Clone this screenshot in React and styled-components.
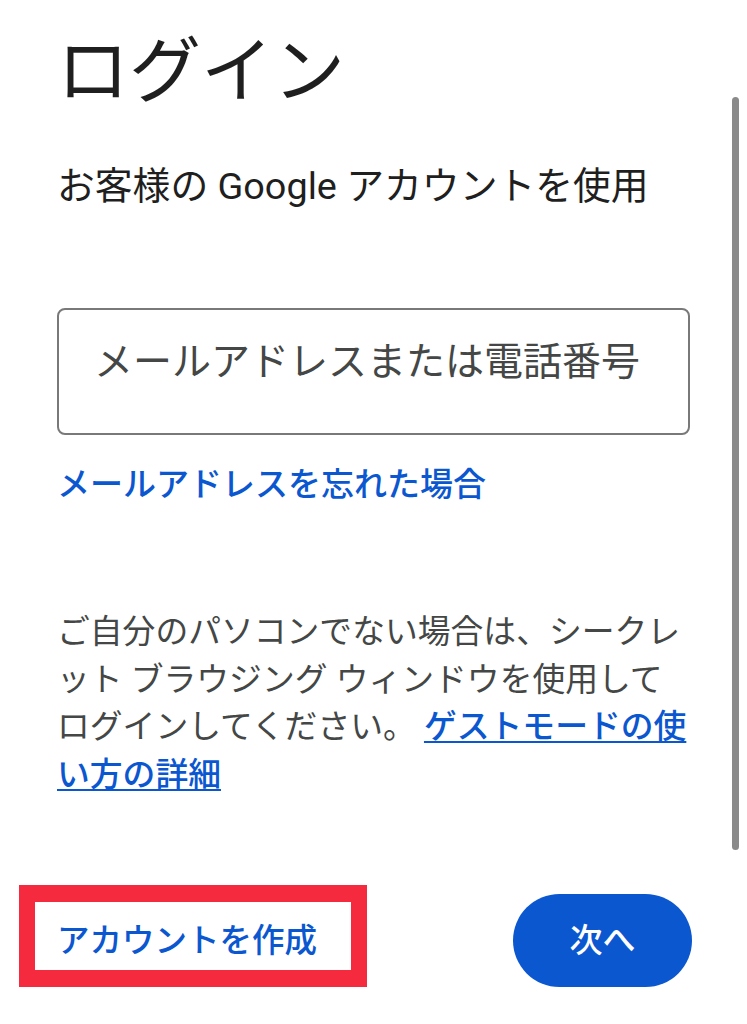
import React from "react";
import styled, { createGlobalStyle } from "styled-components";

const GlobalStyle = createGlobalStyle`
  html, body {
    margin: 0;
    padding: 0;
    background: #ffffff;
  }
  body {
    font-family: Roboto, "Noto Sans CJK JP", "Noto Sans", sans-serif;
    color: #1f1f1f;
    -webkit-font-smoothing: antialiased;
  }
  * { box-sizing: border-box; }
`;

const Page = styled.main`
  display: flex;
  flex-direction: column;
  padding: 28px 57px 0 57px;
  min-height: 1024px;
`;

const Title = styled.h1`
  margin: 0;
  font-size: 72px;
  line-height: 88px;
  font-weight: 400;
  color: #1f1f1f;
`;

const Subtitle = styled.p`
  margin: 46px 0 0 0;
  font-size: 37.8px;
  line-height: 48px;
  font-weight: 400;
  color: #1f1f1f;
`;

const Field = styled.input`
  margin-top: 98px;
  width: 100%;
  height: 127px;
  padding: 6px 20px 26px 35px;
  border: 2px solid #79797a;
  border-radius: 8px;
  font-family: inherit;
  font-size: 39px;
  line-height: 52px;
  color: #1f1f1f;
  background: #fff;
  outline: none;

  &::placeholder {
    color: #444746;
    opacity: 1;
  }
`;

const TextLink = styled.a`
  color: #0b57d0;
  font-weight: 500;
  text-decoration: ${(p) => (p.$underline ? "underline" : "none")};
  text-decoration-thickness: 2px;
  text-underline-offset: 3px;
  cursor: pointer;
`;

const ForgotLink = styled(TextLink)`
  display: block;
  margin-top: 28px;
  font-size: 33px;
  line-height: 44px;
`;

const Note = styled.p`
  margin: 102px 0 0 0;
  font-size: 32.8px;
  line-height: 47.5px;
  color: #444746;
  font-weight: 400;
`;

const Actions = styled.div`
  margin-top: 95px;
  display: flex;
  align-items: center;
  justify-content: space-between;
`;

const CreateButton = styled.button`
  position: relative;
  border: none;
  background: transparent;
  padding: 0;
  margin: 0;
  font-family: inherit;
  font-size: 32.5px;
  line-height: 44px;
  font-weight: 500;
  color: #0b57d0;
  cursor: pointer;
`;

const Highlight = styled.span`
  position: absolute;
  left: -38px;
  right: -50px;
  top: -34px;
  bottom: -24px;
  border-style: solid;
  border-color: #f62a3e;
  border-width: 17px 16px;
  pointer-events: none;
`;

const NextButton = styled.button`
  width: 179px;
  height: 93px;
  margin-right: -2px;
  border: none;
  border-radius: 47px;
  background: #0b57d0;
  color: #ffffff;
  font-family: inherit;
  font-size: 33px;
  line-height: 44px;
  font-weight: 500;
  cursor: pointer;
`;

const Scrollbar = styled.div`
  position: fixed;
  top: 97px;
  right: 8px;
  width: 7px;
  height: 753px;
  border-radius: 4px;
  background: #8a8a8a;
`;

export default function App() {
  return (
    <>
      <GlobalStyle />
      <Page lang="ja">
        <Title>ログイン</Title>
        <Subtitle>お客様の Google アカウントを使用</Subtitle>
        <Field type="text" placeholder="メールアドレスまたは電話番号" />
        <ForgotLink>メールアドレスを忘れた場合</ForgotLink>
        <Note>
          ご自分のパソコンでない場合は、シークレ
          <br />
          ット ブラウジング ウィンドウを使用して
          <br />
          ログインしてください。{" "}
          <TextLink $underline>
            ゲストモードの使
            <br />
            い方の詳細
          </TextLink>
        </Note>
        <Actions>
          <CreateButton>
            アカウントを作成
            <Highlight />
          </CreateButton>
          <NextButton>次へ</NextButton>
        </Actions>
      </Page>
      <Scrollbar />
    </>
  );
}
